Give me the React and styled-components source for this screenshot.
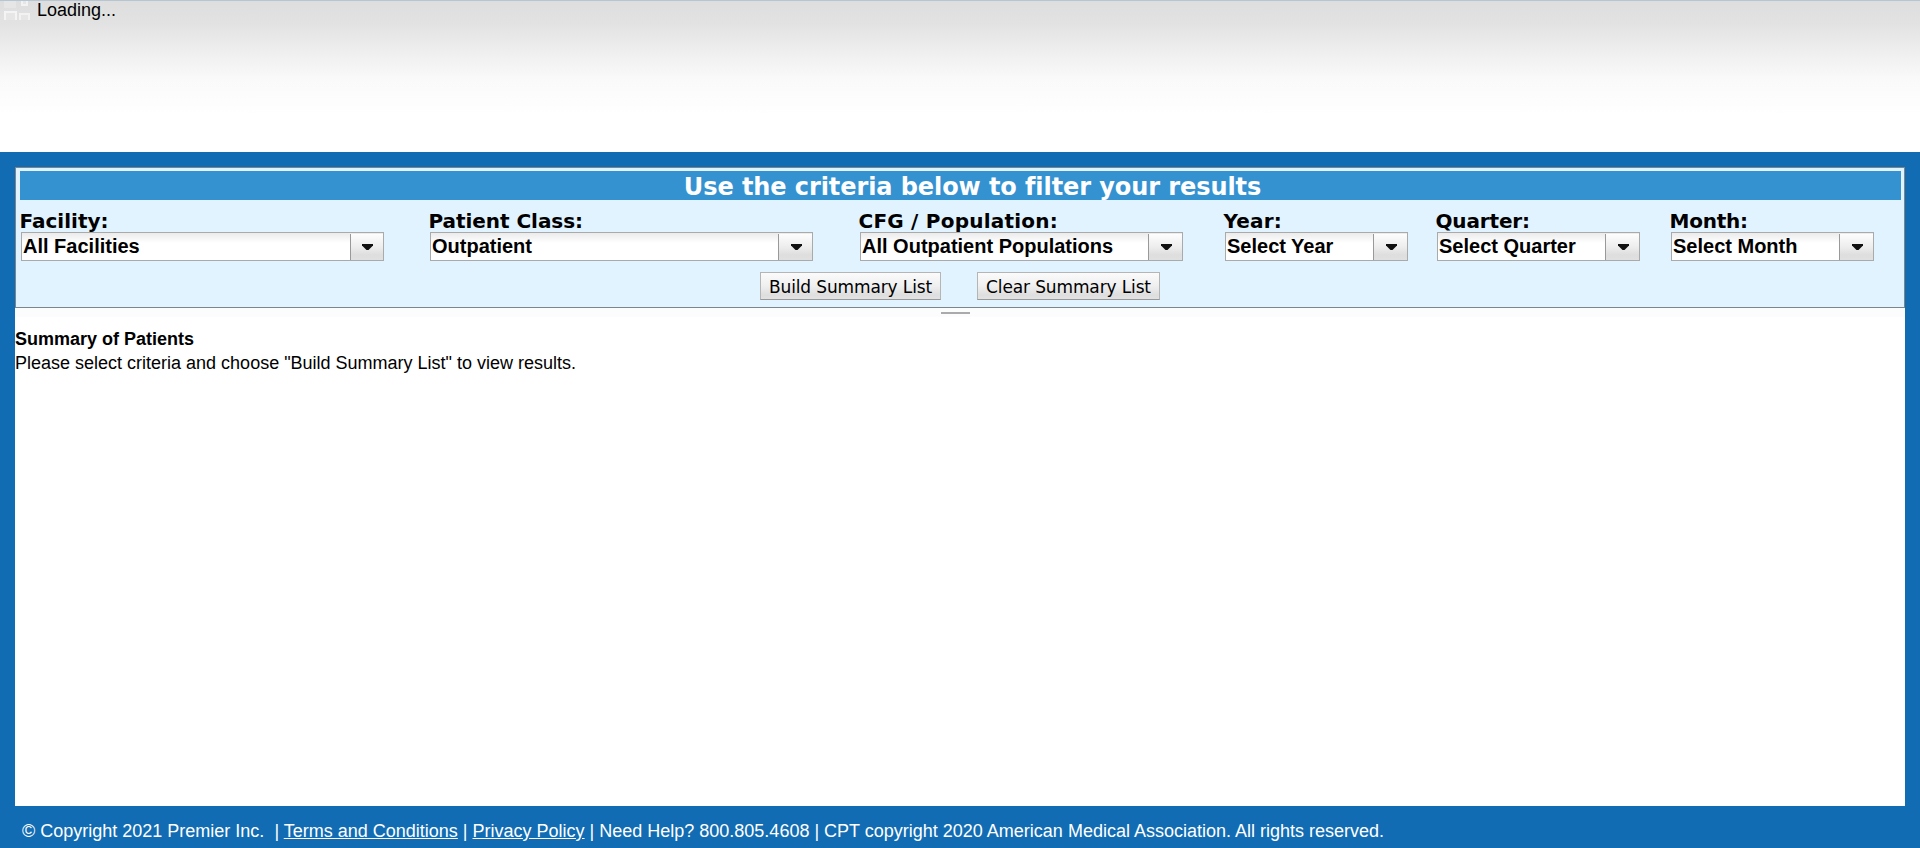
import React from "react";
import styled, { createGlobalStyle } from "styled-components";

const Global = createGlobalStyle`
  * { box-sizing: border-box; }
  body { margin: 0; background: #116cb3; font-family: "Liberation Sans", Arial, sans-serif; color: #000; overflow: hidden; }
`;

const Page = styled.div`
  display: flex;
  flex-direction: column;
  height: 848px;
`;

const Header = styled.header`
  display: flex;
  align-items: flex-start;
  flex: none;
  height: 152px;
  border-top: 1px solid #b5c5d2;
  background: linear-gradient(#dedede 0, #e2e2e2 22px, #f0f0f0 54px, #fafafa 80px, #fff 115px);
`;

const LoadingIcon = styled.svg`
  display: block;
  flex: none;
  width: 37px;
  height: 20px;
`;

const LoadingText = styled.span`
  font-size: 18px;
  line-height: 20px;
  margin-top: -1px;
`;

const Main = styled.main`
  display: flex;
  flex-direction: column;
  flex: none;
  width: 1890px;
  height: 639px;
  margin: 15px 15px 0;
  background: #fff;
`;

const FilterPanel = styled.section`
  flex: none;
  height: 141px;
  padding: 3px 3px 0 4px;
  border: 1px solid #7f8487;
  background: #e0f3ff;
`;

const Title = styled.h1`
  margin: 0;
  height: 29px;
  padding-left: 24px;
  background: #3592d1;
  color: #fff;
  font: bold 24px/32px "DejaVu Sans", Verdana, sans-serif;
  letter-spacing: -0.08px;
  text-align: center;
  font-variant-ligatures: none;
`;

const Filters = styled.div`
  display: flex;
  height: 61px;
  padding-top: 10px;
`;

const Field = styled.div`
  flex: none;
  width: ${(p) => p.$width}px;
  margin-right: ${(p) => p.$gap}px;
`;

const Label = styled.label`
  display: block;
  height: 22px;
  margin-left: -0.5px;
  font: bold 20px/22px "DejaVu Sans", Verdana, sans-serif;
  white-space: nowrap;
  letter-spacing: ${(p) => p.$spacing}px;
`;

const Select = styled.div`
  display: flex;
  height: 29px;
  margin-left: 1px;
  border: 1px solid #aaa;
  background: linear-gradient(#ebebeb, #fff 10px);
`;

const Value = styled.span`
  flex: 1;
  padding-left: 1px;
  font-size: 20px;
  font-weight: bold;
  line-height: 27px;
  white-space: nowrap;
`;

const Arrow = styled.span`
  display: flex;
  align-items: center;
  justify-content: center;
  width: ${(p) => p.$width}px;
  margin-top: 1px;
  padding: 1px 0 0 1px;
  border-left: 1px solid #999;
  background: linear-gradient(#fdfdfd, #ededed 50%, #dedede 80%, #e0e0e0);
`;

const Actions = styled.div`
  display: flex;
  justify-content: center;
  gap: 36px;
  margin-top: 11px;
  padding-right: 2px;
`;

const Button = styled.button`
  width: ${(p) => p.$width}px;
  height: 28px;
  padding: 1px 0 0 1px;
  border: 1px solid #b5b5b5;
  border-bottom-color: #999;
  background: linear-gradient(#fbfbfb, #efefef 50%, #dedede 85%, #e2e2e2);
  color: #000;
  font: 17px/26px "DejaVu Sans", Verdana, sans-serif;
  letter-spacing: -0.13px;
  white-space: nowrap;
`;

const Splitter = styled.div`
  display: flex;
  justify-content: center;
  flex: none;
  height: 9px;
  padding: 4px 9px 0 0;
  background: #fcfcfc;
`;

const Handle = styled.div`
  width: 29px;
  height: 2px;
  background: #aaa;
`;

const SummaryTitle = styled.h2`
  margin: 10px 0 0;
  font-size: 18px;
  line-height: 24px;
`;

const SummaryText = styled.p`
  margin: 0;
  font-size: 18px;
  line-height: 24px;
`;

const Footer = styled.footer`
  padding: 14px 0 0 22px;
  color: #fff;
  font-size: 18px;
  line-height: 22px;
  white-space: pre;
`;

const FooterLink = styled.a`
  color: inherit;
  text-decoration: underline;
`;

const fields = [
  { label: "Facility:", value: "All Facilities", width: 364, gap: 45, spacing: 0, arrow: 33 },
  { label: "Patient Class:", value: "Outpatient", width: 384, gap: 46, spacing: -0.05, arrow: 34 },
  { label: "CFG / Population:", value: "All Outpatient Populations", width: 324, gap: 41, spacing: 0.22, arrow: 34 },
  { label: "Year:", value: "Select Year", width: 184, gap: 28, spacing: 0.2, arrow: 34 },
  { label: "Quarter:", value: "Select Quarter", width: 204, gap: 30, spacing: -0.15, arrow: 34 },
  { label: "Month:", value: "Select Month", width: 204, gap: 0, spacing: -0.25, arrow: 34 },
];

export default function App() {
  return (
    <Page>
      <Global />
      <Header>
        <LoadingIcon viewBox="0 1 37 20" aria-hidden="true">
          <path d="M4 1h12v7H4z" fill="#e6e6e6" />
          <path d="M22 1v4h5V1" fill="#e6e6e6" stroke="#f2f2f2" strokeWidth="2" />
          <path d="M5 20v-8h11v8" fill="#e6e6e6" stroke="#f4f4f4" strokeWidth="2" />
          <path d="M20 20v-6h9v6" fill="#e6e6e6" stroke="#f2f2f2" strokeWidth="2" />
        </LoadingIcon>
        <LoadingText>Loading...</LoadingText>
      </Header>
      <Main>
        <FilterPanel>
          <Title>Use the criteria below to filter your results</Title>
          <Filters>
            {fields.map((f) => (
              <Field key={f.label} $width={f.width} $gap={f.gap}>
                <Label $spacing={f.spacing}>{f.label}</Label>
                <Select>
                  <Value>{f.value}</Value>
                  <Arrow $width={f.arrow}>
                    <svg width="11" height="7" viewBox="0 0 11 7">
                      <path d="M0 0h11v1.500L6.500 6h-2L0 1.500z" fill="#111" />
                    </svg>
                  </Arrow>
                </Select>
              </Field>
            ))}
          </Filters>
          <Actions>
            <Button $width={181}>Build Summary List</Button>
            <Button $width={183}>Clear Summary List</Button>
          </Actions>
        </FilterPanel>
        <Splitter>
          <Handle />
        </Splitter>
        <SummaryTitle>Summary of Patients</SummaryTitle>
        <SummaryText>Please select criteria and choose "Build Summary List" to view results.</SummaryText>
      </Main>
      <Footer>
        © Copyright 2021 Premier Inc.{"  "}| <FooterLink>Terms and Conditions</FooterLink> | <FooterLink>Privacy Policy</FooterLink> | Need Help? 800.805.4608 | CPT copyright 2020 American Medical Association. All rights reserved.
      </Footer>
    </Page>
  );
}
